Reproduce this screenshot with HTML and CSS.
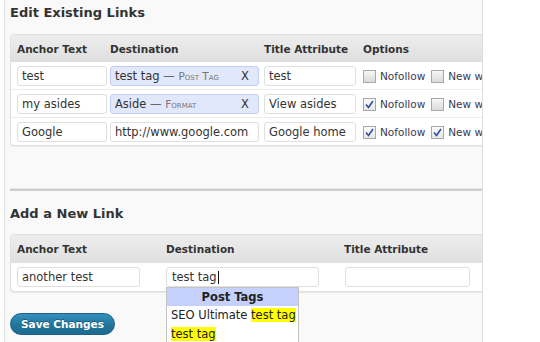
FILE: index.html
```html
<!DOCTYPE html>
<html>
  <head>
    <title>Links</title>
    <link rel="stylesheet" href="styles.css">
  </head>

  <body>
    <div class="panel">
      <h3 class="section-title">Edit Existing Links</h3>

      <table class="links">
        <thead>
          <tr>
            <th class="col-anchor">Anchor Text</th>
            <th class="col-dest">Destination</th>
            <th class="col-title">Title Attribute</th>
            <th class="col-options">Options</th>
          </tr>
        </thead>
        <tbody>
          <tr>
            <td><input class="field anchor" type="text" value="test"></td>
            <td>
              <div class="field dest chip">
                <span>test tag <span class="dash">&mdash;</span> <span class="type">Post Tag</span></span>
                <span class="remove">X</span>
              </div>
            </td>
            <td><input class="field title" type="text" value="test"></td>
            <td>
              <div class="options">
                <label><span class="check"></span>Nofollow</label>
                <label><span class="check"></span>New window</label>
              </div>
            </td>
          </tr>
          <tr>
            <td><input class="field anchor" type="text" value="my asides"></td>
            <td>
              <div class="field dest chip">
                <span>Aside <span class="dash">&mdash;</span> <span class="type">Format</span></span>
                <span class="remove">X</span>
              </div>
            </td>
            <td><input class="field title" type="text" value="View asides"></td>
            <td>
              <div class="options">
                <label><span class="check checked"><svg viewBox="0 0 11 11"><path d="M2 5.5 L4.5 8.5 L9 2"/></svg></span>Nofollow</label>
                <label><span class="check"></span>New window</label>
              </div>
            </td>
          </tr>
          <tr>
            <td><input class="field anchor" type="text" value="Google"></td>
            <td><input class="field dest" type="text" value="http://www.google.com"></td>
            <td><input class="field title" type="text" value="Google home"></td>
            <td>
              <div class="options">
                <label><span class="check checked"><svg viewBox="0 0 11 11"><path d="M2 5.5 L4.5 8.5 L9 2"/></svg></span>Nofollow</label>
                <label><span class="check checked"><svg viewBox="0 0 11 11"><path d="M2 5.5 L4.5 8.5 L9 2"/></svg></span>New window</label>
              </div>
            </td>
          </tr>
        </tbody>
      </table>

      <div class="divider"></div>

      <h3 class="section-title new-title">Add a New Link</h3>

      <table class="links new-link">
        <thead>
          <tr>
            <th class="col-anchor">Anchor Text</th>
            <th class="col-dest">Destination</th>
            <th class="col-title">Title Attribute</th>
          </tr>
        </thead>
        <tbody>
          <tr>
            <td><input class="field anchor" type="text" value="another test"></td>
            <td class="dest-cell">
              <div class="field dest focused">test tag<span class="caret"></span></div>
              <!-- autocomplete results -->
              <div class="suggest">
                <div class="suggest-head">Post Tags</div>
                <div class="suggest-item">SEO Ultimate <span class="hit">test tag</span></div>
                <div class="suggest-item"><span class="hit">test tag</span></div>
              </div>
            </td>
            <td><input class="field title" type="text" value=""></td>
          </tr>
        </tbody>
      </table>

      <div class="actions">
        <button class="button-primary" type="button">Save Changes</button>
      </div>
    </div>
  </body>
</html>
```

FILE: styles.css
```css
* {
  box-sizing: border-box;
  margin: 0;
  padding: 0;
}

body {
  background: #fff;
  color: #333;
  font-family: "DejaVu Sans", Verdana, sans-serif;
}

.panel {
  width: 479px;
  height: 342px;
  margin-left: 4px;
  padding-left: 5px;
  background: #f9f9f9;
  border-left: 1px solid #dfdfdf;
  border-right: 1px solid #dfdfdf;
  overflow: hidden;
}

.section-title {
  padding-top: 5px;
  margin-bottom: 13px;
  font-size: 13px;
  line-height: 16px;
  font-weight: bold;
  color: #333;
}

.new-title {
  padding-top: 0;
  margin-top: 15px;
  margin-bottom: 12px;
}

/* Tables */
.links {
  width: 531px;
  table-layout: fixed;
  border-collapse: separate;
  border-spacing: 0;
  border: 1px solid #dfdfdf;
  border-radius: 4px;
  background: #fff;
  box-shadow: 0 1px 0 #e9e9e9;
}

.links th {
  height: 27px;
  padding: 0;
  text-align: left;
  vertical-align: middle;
  font-size: 10.5px;
  font-weight: bold;
  color: #333;
  background: linear-gradient(to bottom, #ededed, #dfdfdf);
  white-space: nowrap;
}

.links th:first-child {
  border-top-left-radius: 3px;
}

.links td {
  height: 28px;
  padding: 4px 0 3px;
  vertical-align: top;
  border-bottom: 1px solid #ececec;
  line-height: 0;
}

.links tr:last-child td {
  height: 27px;
  border-bottom: none;
}

.links th:first-child,
.links td:first-child {
  padding-left: 6px;
}

.col-anchor { width: 99px; }
.col-dest { width: 154px; }
.col-title { width: 99px; }
.col-options { width: 177px; }

.new-link th {
  height: 28px;
}

.new-link td,
.new-link tr:last-child td {
  height: 28px;
  padding-bottom: 4px;
}

.new-link .col-anchor { width: 155px; }
.new-link .col-dest { width: 178px; }
.new-link .col-title { width: 196px; }

/* Fields */
.field {
  display: block;
  height: 20px;
  padding: 0 4px;
  border: 1px solid #dfdfdf;
  border-radius: 3px;
  background: #fff;
  font-family: "DejaVu Sans", Verdana, sans-serif;
  font-size: 11.5px;
  line-height: 18px;
  color: #333;
  outline: none;
}

.field.anchor { width: 90px; }
.field.dest { width: 149px; }
.field.title { width: 92px; }

.new-link .field.anchor { width: 123px; }
.new-link .field.dest { width: 153px; }
.new-link .field.title { width: 125px; margin-left: 1px; }

.chip {
  display: flex;
  justify-content: space-between;
  padding-right: 9px;
  background: #e1e8fc;
  border-color: #c3cff3;
  white-space: nowrap;
}

.chip .dash {
  color: #666;
}

.chip .type {
  font-size: 10.5px;
  font-variant: small-caps;
  color: #777;
}

.chip .remove {
  color: #333;
}

.focused {
  display: flex;
  align-items: center;
  padding-left: 5px;
}

.caret {
  display: inline-block;
  width: 1px;
  height: 13px;
  margin-left: 1px;
  background: #111;
}

/* Options */
.options {
  display: flex;
  align-items: center;
  height: 20px;
  gap: 6px;
  white-space: nowrap;
  font-size: 10.5px;
  line-height: 20px;
  color: #3a3a50;
}

.options label {
  display: flex;
  align-items: center;
  gap: 4px;
}

.check {
  display: block;
  width: 13px;
  height: 13px;
  border: 1px solid #a8a8a8;
  background: linear-gradient(to bottom, #f7f7f7, #dadada);
}

.check.checked {
  background: linear-gradient(to bottom, #fbfbfb, #e6e6e6);
}

.check svg {
  display: block;
  width: 11px;
  height: 11px;
  fill: none;
  stroke: #2d4f9e;
  stroke-width: 1.6;
}

.divider {
  margin-top: 42px;
  border-top: 1px solid #e4e4e4;
  border-bottom: 2px solid #cdcdcd;
}

/* Autocomplete */
.dest-cell {
  position: relative;
}

.suggest {
  position: absolute;
  top: 24px;
  left: 0;
  width: 133px;
  border: 1px solid #c4c4c4;
  background: #fff;
  font-size: 11.5px;
  line-height: normal;
  color: #222;
}

.suggest-head {
  height: 18px;
  line-height: 18px;
  text-align: center;
  font-weight: bold;
  background: #c5d1fc;
}

.suggest-item {
  height: 19px;
  line-height: 19px;
  padding-left: 4px;
  white-space: nowrap;
}

.hit {
  background: #ffff00;
}

/* Button */
.actions {
  margin-top: 21px;
}

.button-primary {
  height: 22px;
  padding: 0 10px;
  border: 1px solid #1d6286;
  border-radius: 11px;
  background: linear-gradient(to bottom, #3390c0, #21759b 55%, #1d6a8e);
  color: #fff;
  font-family: "DejaVu Sans", Verdana, sans-serif;
  font-size: 10.5px;
  font-weight: bold;
  line-height: 20px;
  text-shadow: 0 -1px 0 rgba(0, 0, 0, 0.3);
  cursor: pointer;
}
```
